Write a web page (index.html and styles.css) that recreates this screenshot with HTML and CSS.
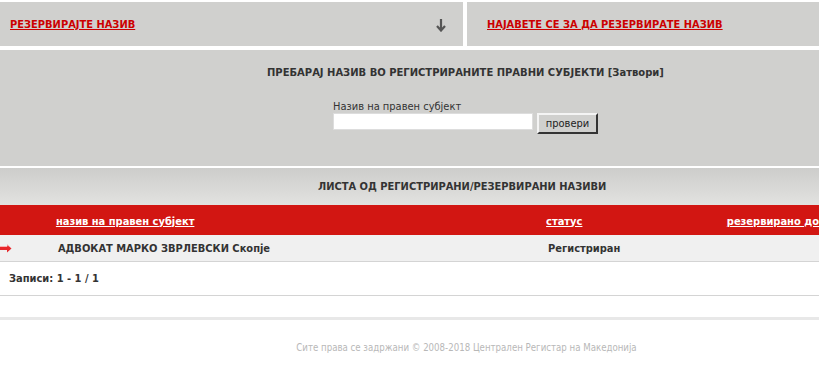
FILE: index.html
```html
<!DOCTYPE html>
<html>
<head>
	<title>Резервација на назив</title>
	<link rel="stylesheet" href="styles.css">
</head>
<body>

	<div class="top">
		<div class="top-left">
			<a href="#" class="red-link">РЕЗЕРВИРАЈТЕ НАЗИВ</a>
			<svg class="down" width="10" height="13" viewBox="0 0 10 13">
				<path d="M5 0 V11 M1 7 L5 11.5 L9 7" stroke="#555" stroke-width="2.2" fill="none"/>
			</svg>
		</div>
		<div class="top-right">
			<a href="#" class="red-link">НАЈАВЕТЕ СЕ ЗА ДА РЕЗЕРВИРАТЕ НАЗИВ</a>
		</div>
	</div>

	<div class="search">
		<div class="search-title">ПРЕБАРАЈ НАЗИВ ВО РЕГИСТРИРАНИТЕ ПРАВНИ СУБЈЕКТИ <a href="#" class="close">[Затвори]</a></div>
		<div class="search-form">
			<label for="name">Назив на правен субјект</label>
			<div class="search-row">
				<input type="text" id="name" value="">
				<button class="button">провери</button>
			</div>
		</div>
	</div>

	<div class="list-title">ЛИСТА ОД РЕГИСТРИРАНИ/РЕЗЕРВИРАНИ НАЗИВИ</div>

	<table class="list">
		<tr class="head">
			<td class="c0"></td>
			<td class="c1"><a href="#">назив на правен субјект</a></td>
			<td class="c2"><a href="#">статус</a></td>
			<td class="c3"><a href="#">резервирано до</a></td>
		</tr>
		<tr class="row">
			<td class="c0">
				<svg width="12" height="9" viewBox="0 0 12 9">
					<path d="M0 3 H7 V0.5 L11.5 4.5 L7 8.5 V6 H0 Z" fill="#e8262a"/>
					<path d="M0 3 H7 V0.5 L9 2.3 H0 Z" fill="#f7a0a0"/>
				</svg>
			</td>
			<td class="c1">АДВОКАТ МАРКО ЗВРЛЕВСКИ Скопје</td>
			<td class="c2">Регистриран</td>
			<td class="c3"></td>
		</tr>
	</table>

	<div class="records">Записи: 1 - 1 / 1</div>
	<div class="spacer"></div>

	<div class="footer">Сите права се задржани © 2008-2018 Централен Регистар на Македонија</div>

</body>
</html>
```

FILE: styles.css
```css
body{
	margin: 0;
	font-family: "DejaVu Sans Condensed", "DejaVu Sans", sans-serif;
	font-size: 11px;
	color: #333;
	background: white;
}

.red-link{color: #c00; font-weight: bold; font-size: 11px;}

.top{display: flex; margin-top: 2px; height: 44px;}
.top-left{width: 463px; background: #d0d0ce; display: flex; align-items: center; padding-left: 10px; box-sizing: border-box;}
.top-left .down{margin-left: auto; margin-right: 17px; margin-top: 3px;}
.top-right{flex: 1; margin-left: 4px; background: #d0d0ce; display: flex; align-items: center; padding-left: 20px;}

.search{margin-top: 4px; height: 116px; background: #d0d0ce; box-sizing: border-box; padding-top: 16px;}
.search-title{font-weight: bold; padding-left: 267px; font-size: 11.1px;}
.search-title .close{color: #333; text-decoration: none; font-weight: bold;}
.search-form{padding-left: 333px; padding-top: 21px;}
.search-form label{display: block; font-size: 11px; line-height: 13px;}
.search-row{display: flex; align-items: flex-start; gap: 4px;}
.search-row input{width: 200px; height: 17px; border: 1px solid #ddd; box-sizing: border-box; padding: 0; margin: 0; font-size: 11px;}
.button{width: 61px; height: 21px; background: #d0d0ce; border: 2px outset #eee; border-color: #f4f4f4 #888 #888 #f4f4f4; font-family: inherit; font-size: 11px; color: #222; padding: 0; margin: 0;}

.list-title{margin-top: 2px; height: 37px; line-height: 37px; background: linear-gradient(#cdcdcb, #e2e2e0); font-weight: bold; padding-left: 318px;}

.list{width: 100%; border-collapse: collapse;}
.list td{padding: 0; font-weight: bold; white-space: nowrap;}
.list .head{background: #d21612; height: 30px;}
.list .head td{padding-top: 2px;}
.list .head a{color: white;}
.list .row{background: #f0f0f0; height: 26px; border-bottom: 1px solid #d4d4d4;}
.list .row td{padding-top: 2px;}
.list .c0{width: 56px;}
.list .row .c0{vertical-align: middle; line-height: 0;}
.list .row .c1{padding-left: 2px;}
.list .c1{width: 489px;}
.list .c2{width: 179px;}
.list .row .c2{padding-left: 2px;}

.records{font-weight: bold; padding-left: 9px; height: 33px; line-height: 34px; border-bottom: 1px solid #d4d4d4;}
.spacer{height: 21px; border-bottom: 3px solid #e8e8e8;}

.footer{text-align: center; padding-left: 114px; color: #b8b8b8; font-size: 9.6px; padding-top: 22px;}
```
